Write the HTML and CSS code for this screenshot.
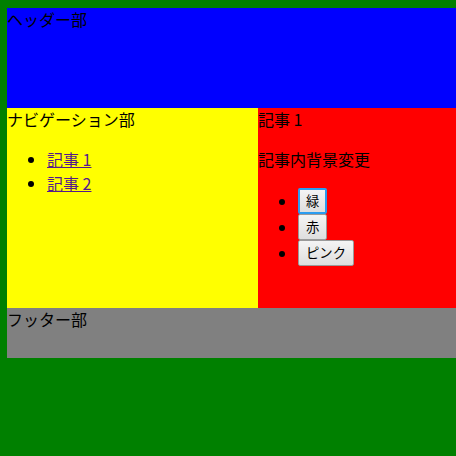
FILE: index.html
```html
<!DOCTYPE html>
<html lang="ja">
<head>
<meta charset="utf-8">
<title>レイアウト</title>
<link rel="stylesheet" href="styles.css">
</head>
<body>
<header class="header">ヘッダー部</header>
<div class="main">
  <nav class="nav">
    ナビゲーション部
    <ul class="list">
      <li><a class="link" href="#a1">記事 1</a></li>
      <li><a class="link" href="#a2">記事 2</a></li>
    </ul>
  </nav>
  <article class="article">
    <div class="title">記事 1</div>
    <p class="para">記事内背景変更</p>
    <ul class="list btn-list">
      <li class="btn-item"><button class="btn btn-focus" type="button">緑</button></li>
      <li class="btn-item"><button class="btn" type="button">赤</button></li>
      <li class="btn-item"><button class="btn" type="button">ピンク</button></li>
    </ul>
  </article>
</div>
<footer class="footer">フッター部</footer>
</body>
</html>
```

FILE: styles.css
```css
html {
  background: #008000;
}
body {
  margin: 8px 0 0 7px;
  font-family: "Noto Sans CJK JP", "Noto Sans", sans-serif;
  font-size: 16px;
  line-height: 22px;
  color: #000;
}
.header {
  height: 98px;
  padding-bottom: 2px;
  background: #0000ff;
}
.main {
  display: flex;
  height: 200px;
}
.nav {
  width: 251px;
  background: #ffff00;
}
.article {
  flex: 1;
  background: #ff0000;
}
.list {
  margin: 18px 0 16px;
  padding-left: 40px;
}
.list li {
  height: 24px;
}
.title {
  height: 24px;
}
.para {
  margin: 16px 0;
  height: 24px;
}
.btn-list {
  margin-top: 16px;
}
.list .btn-item {
  height: 26px;
  line-height: 26px;
}
.link {
  color: #551a8b;
}
.btn {
  font-family: "Noto Sans CJK JP", sans-serif;
  font-size: 13.333px;
  line-height: 20px;
  height: 26px;
  padding: 2px 7px;
  margin: 0;
  border: 1px solid #9a9a9a;
  border-radius: 2px;
  background: linear-gradient(#f4f4f4, #dedede);
  color: #000;
  vertical-align: top;
}
.btn-focus {
  border: 2px solid #2b9cf0;
  padding: 1px 6px;
}
.footer {
  height: 50px;
  background: #808080;
}
```
